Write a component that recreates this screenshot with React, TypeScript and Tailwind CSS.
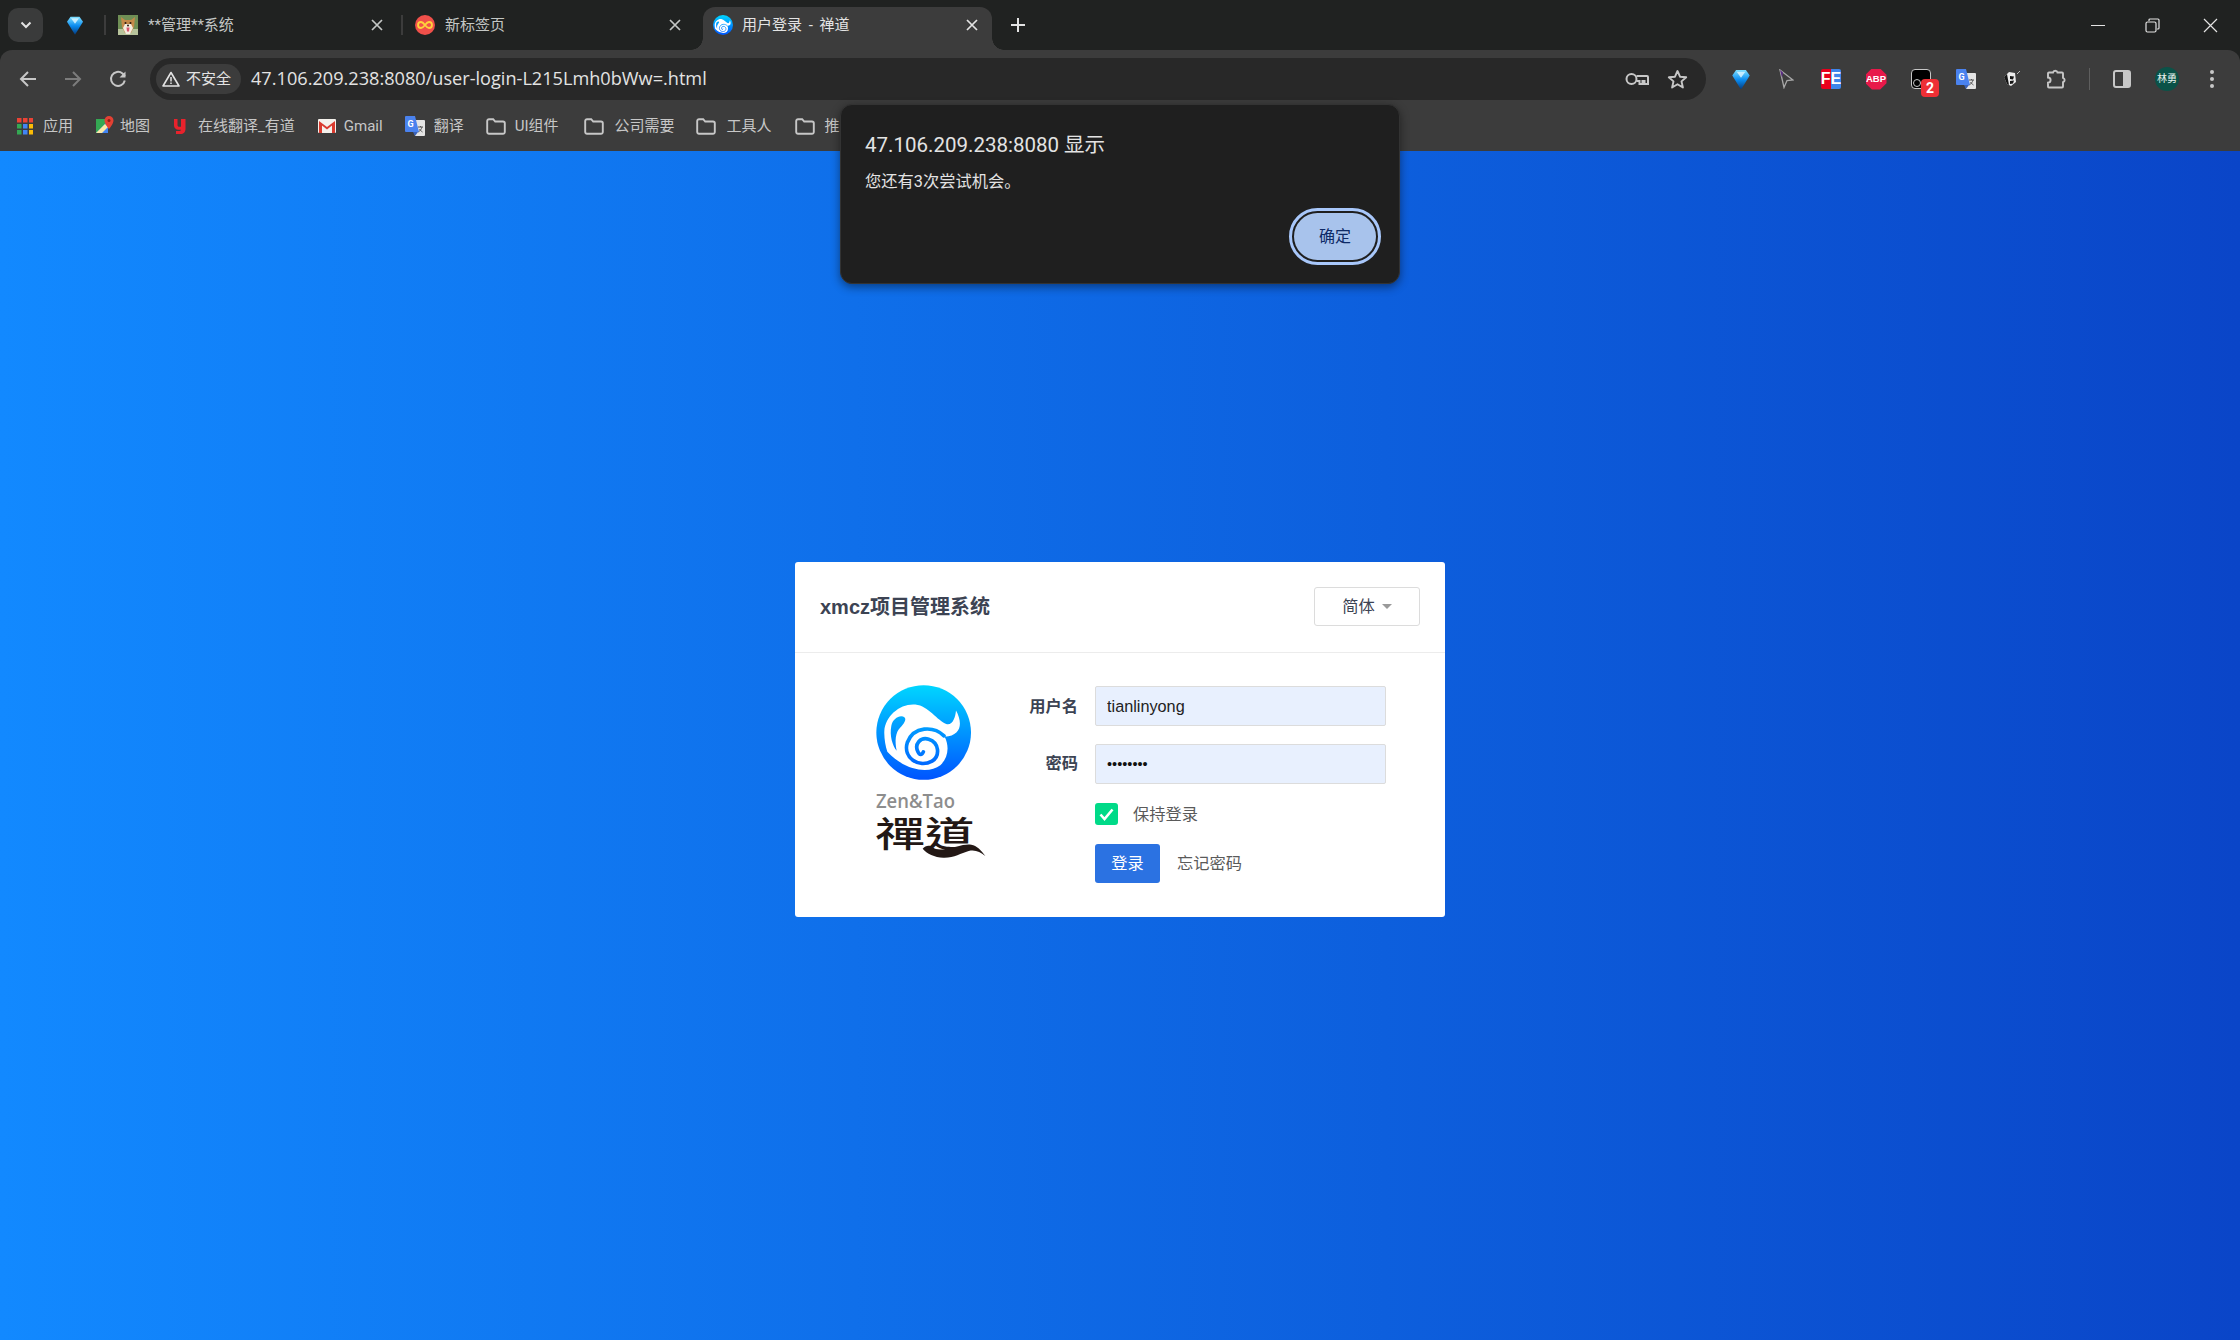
import React from "react";

const ui = { fontFamily: '"Roboto","Noto Sans CJK SC",sans-serif' };
const chromeText = { fontFamily: '"Open Sans","Noto Sans CJK SC",sans-serif' };
const web = { fontFamily: '"Liberation Sans","Noto Sans CJK SC",sans-serif' };

function Diamond({ id, size = 18 }: { id: string; size?: number }) {
  return (
    <svg width={size} height={size * 1.15} viewBox="0 0 16 19">
      <defs>
        <linearGradient id={id} x1="0" y1="0" x2="0" y2="1">
          <stop offset="0" stopColor="#7fe0ff" />
          <stop offset="0.5" stopColor="#0a8cf0" />
          <stop offset="1" stopColor="#04387a" />
        </linearGradient>
      </defs>
      <path d="M3.500 1h9L16 6l-8 13L0 6z" fill={`url(#${id})`} />
      <path d="M4 2.500h8L8 8z" fill="#d9f5ff" opacity=".85" />
    </svg>
  );
}

function CloseX({ color = "#c4c7c5" }: { color?: string }) {
  return (
    <svg width="12" height="12" viewBox="0 0 12 12">
      <path d="M1 1l10 10M11 1L1 11" stroke={color} strokeWidth="1.700" />
    </svg>
  );
}

function Dog() {
  return (
    <svg width="20" height="20" viewBox="0 0 20 20">
      <rect width="20" height="20" fill="#6f8f55" />
      <rect y="14" width="20" height="6" fill="#b7c39b" />
      <path d="M3 2l4 3h6l4-3-1 10-3 6H7l-3-6z" fill="#c58a4a" />
      <path d="M7 9h6l2 4-3 6H8l-3-6z" fill="#f4ecdf" />
      <circle cx="7.500" cy="8" r="1" fill="#2a1b10" />
      <circle cx="12.500" cy="8" r="1" fill="#2a1b10" />
      <circle cx="10" cy="10.500" r="1" fill="#2a1b10" />
      <path d="M8.500 12.500h3l-.5 4H9z" fill="#d9556b" />
    </svg>
  );
}

function Infinity2() {
  return (
    <svg width="20" height="20" viewBox="0 0 20 20">
      <circle cx="10" cy="10" r="10" fill="#f0504a" />
      <path
        d="M10 10c-1.500-2-2.600-3-4-3a3 3 0 000 6c1.400 0 2.500-1 4-3s2.600-3 4-3a3 3 0 010 6c-1.400 0-2.500-1-4-3z"
        fill="none"
        stroke="#ffd23c"
        strokeWidth="1.800"
      />
    </svg>
  );
}

/* Zentao mark, drawn in a 330x315 space with the disc centred on (165,150). */
function Mark({ id }: { id: string }) {
  return (
    <>
      <defs>
        <linearGradient id={id} gradientUnits="userSpaceOnUse" x1="0" y1="8" x2="0" y2="292">
          <stop offset="0" stopColor="#00d6ff" />
          <stop offset="1" stopColor="#0054ff" />
        </linearGradient>
      </defs>
      <circle cx="165" cy="150" r="142" fill={`url(#${id})`} />
      <path
        d="M47 145C50 100 95 62 140 66C180 70 205 115 235 125C252 128 260 105 262 84C282 120 280 160 228 163C242 190 240 225 215 248C180 275 110 265 56 208C50 190 46 165 47 145Z"
        fill="#fff"
      />
      <path
        d="M68 130C72 108 95 95 108 105C114 112 105 125 95 135C80 150 78 175 84 205C72 190 62 160 68 130Z"
        fill={`url(#${id})`}
      />
      <path
        d="M226 160C195 130 135 130 116 180C102 225 150 258 190 236C215 220 212 180 180 170C155 163 136 185 148 208C152 218 160 218 164 208"
        fill="none"
        stroke={`url(#${id})`}
        strokeWidth="11"
        strokeLinecap="round"
      />
    </>
  );
}

function ZenFav() {
  return (
    <svg width="20" height="20" viewBox="23 8 284 284" className="shrink-0">
      <Mark id="favMark" />
    </svg>
  );
}

function Tab({
  width,
  icon,
  title,
  closeRight,
}: {
  width: number;
  icon: React.ReactNode;
  title: string;
  closeRight: string;
}) {
  return (
    <div className="flex items-center h-full pl-[12px]" style={{ width }}>
      {icon}
      <span className="ml-[10px] text-[15px] text-[#c4c7c5] whitespace-nowrap">{title}</span>
      <span className={`ml-auto ${closeRight}`}>
        <CloseX />
      </span>
    </div>
  );
}

function Slot({ children }: { children: React.ReactNode }) {
  return <div className="w-[45px] h-[44px] flex items-center justify-center shrink-0 relative">{children}</div>;
}

function Folder() {
  return (
    <svg width="20" height="17" viewBox="0 0 20 17" className="shrink-0">
      <path
        d="M1.200 3a1.800 1.800 0 011.800-1.800h4.200l2 2.300H17a1.800 1.800 0 011.800 1.800V14a1.800 1.800 0 01-1.800 1.800H3A1.800 1.800 0 011.200 14z"
        fill="none"
        stroke="#c7c7c7"
        strokeWidth="1.900"
      />
    </svg>
  );
}

function Bm({ icon, label, ml, gap }: { icon: React.ReactNode; label: string; ml: string; gap: string }) {
  return (
    <div className={`flex items-center ${ml} shrink-0`}>
      {icon}
      <span className={`${gap} text-[15px] text-[#c7c7c7] whitespace-nowrap`}>{label}</span>
    </div>
  );
}

function TranslateIcon() {
  return (
    <svg width="20" height="21" viewBox="0 0 20 21">
      <path d="M8 4h11a1 1 0 011 1v14a1 1 0 01-1 1H10z" fill="#e4e4e4" />
      <path d="M1 0h9l4 16H1a1 1 0 01-1-1V1a1 1 0 011-1z" fill="#4a82ee" />
      <path d="M8 16l2 4 3-4z" fill="#3a62b8" />
      <text x="5.500" y="11" fontSize="9" fontWeight="700" fill="#fff" textAnchor="middle" fontFamily="Roboto">G</text>
      <path d="M13 11h5M15.500 10v1M17 11c-.5 2-2 4-3.500 5M14.500 13c.5 1 1.500 2 3 3" stroke="#555" strokeWidth="1" fill="none" />
    </svg>
  );
}

function Logo() {
  return (
    <svg width="150" height="200" viewBox="0 0 450 600" className="shrink-0">
      <g transform="translate(56 37.500)">
        <Mark id="logoMark" />
      </g>
      <text x="78" y="415" fontSize="58" fill="#8d8d8d" fontFamily='"Open Sans",sans-serif' fontWeight="600" textLength="237" lengthAdjust="spacingAndGlyphs">
        Zen&amp;Tao
      </text>
      <text x="76" y="530" fontSize="106" fill="#231815" fontFamily='"Noto Sans CJK TC",sans-serif' fontWeight="500" textLength="298" lengthAdjust="spacingAndGlyphs">
        禪道
      </text>
      <path d="M218 536c8-10 22-12 30-4 6 6 20 8 34 6 32-5 60-18 82-14 16 3 30 16 42 34-16-12-30-20-50-15-24 7-44 21-76 20-26-1-50-12-62-27z" fill="#231815" />
    </svg>
  );
}

export default function App() {
  return (
    <div className="relative w-[2240px] h-[1340px] flex flex-col overflow-hidden bg-[#202221]" style={ui}>
      {/* Tab strip */}
      <div className="h-[50px] flex items-center shrink-0 relative">
        <div className="ml-[8px] w-[35px] h-[34px] rounded-[10px] bg-[#3a3b3b] flex items-center justify-center shrink-0">
          <svg width="12" height="8" viewBox="0 0 12 8">
            <path d="M1.500 1.500L6 6l4.500-4.500" fill="none" stroke="#e3e3e3" strokeWidth="2" />
          </svg>
        </div>
        <div className="ml-[24px] w-[16px] flex justify-center shrink-0">
          <Diamond id="diaTab" />
        </div>
        <div className="ml-[21px] w-[2px] h-[20px] bg-[#3c3c3c] shrink-0" />
        <Tab width={295} icon={<Dog />} title="**管理**系统" closeRight="mr-[18px]" />
        <div className="w-[2px] h-[20px] bg-[#3c3c3c] shrink-0" />
        <Tab width={300} icon={<Infinity2 />} title="新标签页" closeRight="mr-[22px]" />
        <div className="self-end h-[43px] w-[289px] bg-[#3c3c3c] rounded-t-[12px] flex items-center pl-[10px] pb-[7px] shrink-0 relative">
          <ZenFav />
          <span className="ml-[9px] text-[15px] text-[#e3e3e3] whitespace-nowrap [word-spacing:3px]">用户登录 - 禅道</span>
          <span className="ml-auto mr-[14px]">
            <CloseX color="#e3e3e3" />
          </span>
          <span className="absolute left-[-12px] bottom-0 w-[12px] h-[12px] bg-[radial-gradient(circle_at_0_0,#202221_11.500px,#3c3c3c_12px)]" />
          <span className="absolute right-[-12px] bottom-0 w-[12px] h-[12px] bg-[radial-gradient(circle_at_100%_0,#202221_11.500px,#3c3c3c_12px)]" />
        </div>
        <div className="ml-[19px] shrink-0">
          <svg width="14" height="14" viewBox="0 0 14 14">
            <path d="M7 0v14M0 7h14" stroke="#e3e3e3" strokeWidth="2" />
          </svg>
        </div>
        <div className="ml-auto flex items-center shrink-0">
          <div className="w-[55px] flex justify-center">
            <span className="block w-[14px] h-[1px] bg-[#e3e3e3]" />
          </div>
          <div className="w-[55px] flex justify-center">
            <svg width="15" height="15" viewBox="0 0 15 15">
              <path d="M4 3V2a1 1 0 011-1h8a1 1 0 011 1v8a1 1 0 01-1 1h-1" fill="none" stroke="#e3e3e3" strokeWidth="1.200" />
              <rect x="1" y="4" width="10" height="10" rx="1.500" fill="none" stroke="#e3e3e3" strokeWidth="1.200" />
            </svg>
          </div>
          <div className="w-[60px] flex justify-center">
            <svg width="15" height="15" viewBox="0 0 15 15">
              <path d="M1 1l13 13M14 1L1 14" stroke="#e3e3e3" strokeWidth="1.200" />
            </svg>
          </div>
        </div>
      </div>

      {/* Toolbar */}
      <div className="h-[51px] flex items-center bg-[#3c3c3c] rounded-t-[12px] shrink-0 pl-[5px] pt-[7px]">
        <Slot>
          <svg width="20" height="20" viewBox="0 0 20 20">
            <path d="M18 10H3M10 3l-7 7 7 7" fill="none" stroke="#c7c7c7" strokeWidth="2" />
          </svg>
        </Slot>
        <Slot>
          <svg width="20" height="20" viewBox="0 0 20 20">
            <path d="M2 10h15M10 3l7 7-7 7" fill="none" stroke="#7c7c7c" strokeWidth="2" />
          </svg>
        </Slot>
        <Slot>
          <svg width="20" height="20" viewBox="0 0 20 20">
            <path d="M16.800 11.500A7 7 0 1114.500 4.500L17 7" fill="none" stroke="#c7c7c7" strokeWidth="2" />
            <path d="M17.500 2.500v6h-6z" fill="#c7c7c7" />
          </svg>
        </Slot>
        <div className="ml-[10px] w-[1556px] h-[42px] rounded-full bg-[#282828] flex items-center pl-[6px] pr-[9px] shrink-0">
          <div className="w-[85px] h-[30px] rounded-full bg-[#3c3c3c] flex items-center pl-[6px] shrink-0">
            <svg width="18" height="16" viewBox="0 0 18 16">
              <path d="M9 1.500L17 15H1z" fill="none" stroke="#e3e3e3" strokeWidth="1.600" strokeLinejoin="round" />
              <path d="M9 6v4.500M9 11.500v1.500" stroke="#e3e3e3" strokeWidth="1.500" />
            </svg>
            <span className="ml-[6px] text-[15px] text-[#e3e3e3] whitespace-nowrap">不安全</span>
          </div>
          <span className="ml-[10px] text-[18.150px] text-[#e3e3e3] whitespace-nowrap" style={chromeText}>
            47.106.209.238:8080/user-login-L215Lmh0bWw=.html
          </span>
          <div className="ml-auto w-[40px] flex justify-center shrink-0">
            <svg width="24" height="14" viewBox="0 0 24 14">
              <circle cx="6.500" cy="7" r="5" fill="none" stroke="#c7c7c7" strokeWidth="2" />
              <path d="M11.500 4h10.500a1 1 0 011 1v7h-3.500v-3h-2v3h-3v-3h-3" fill="none" stroke="#c7c7c7" strokeWidth="2" />
            </svg>
          </div>
          <div className="w-[40px] flex justify-center shrink-0">
            <svg width="21" height="20" viewBox="0 0 21 20">
              <path d="M10.500 2l2.500 5.700 6.200.6-4.700 4.100 1.400 6.100-5.400-3.200-5.400 3.200 1.400-6.100-4.700-4.100 6.200-.6z" fill="none" stroke="#c7c7c7" strokeWidth="1.900" strokeLinejoin="round" />
            </svg>
          </div>
        </div>
        <div className="ml-[12.500px] flex items-center">
          <Slot>
            <Diamond id="diaBar" />
          </Slot>
          <Slot>
            <svg width="16" height="20" viewBox="0 0 16 20">
              <path d="M2 1l13 10-6 .5-3 7z" fill="none" stroke="#a8a8a8" strokeWidth="1.300" />
              <path d="M2 1l3 2.500-1 5z" fill="#5b2a86" />
            </svg>
          </Slot>
          <Slot>
            <div className="w-[20px] h-[20px] rounded-[2px] flex items-center justify-center bg-[linear-gradient(90deg,#e8001c_50%,#3f86ea_50%)]">
              <span className="text-[16px] leading-none font-black text-white" style={web}>FE</span>
            </div>
          </Slot>
          <Slot>
            <div className="w-[21px] h-[21px] [clip-path:polygon(30%_0,70%_0,100%_30%,100%_70%,70%_100%,30%_100%,0_70%,0_30%)] bg-[#e8194a] flex items-center justify-center">
              <span className="text-[9.500px] leading-none font-bold text-white" style={web}>ABP</span>
            </div>
          </Slot>
          <Slot>
            <div className="relative w-[20px] h-[20px] rounded-[4px] bg-black border border-[#c7c7c7]">
              <span className="absolute left-[1px] bottom-[1px] w-[8px] h-[8px] rounded-full border border-[#c7c7c7]" />
              <span className="absolute left-[9px] top-[9px] w-[18px] h-[18px] rounded-[4px] bg-[#ee2f35] flex items-center justify-center text-[14px] leading-none font-bold text-white">2</span>
            </div>
          </Slot>
          <Slot>
            <TranslateIcon />
          </Slot>
          <Slot>
            <svg width="21" height="20" viewBox="0 0 21 20">
              <path d="M3 8l5-5 6 1 1 9-5 4-4-2z" fill="#ececec" />
              <path d="M3 8l3-3 2 11-2-1zM9 7l4 .5-1 3-3-.5zM9 12l4-.5-1 3-3 .5z" fill="#151515" />
              <path d="M16 5l3-3" stroke="#bdbdbd" strokeWidth="1" />
            </svg>
          </Slot>
          <Slot>
            <svg width="21" height="21" viewBox="0 0 21 21">
              <path d="M2 4.500a1 1 0 011-1h4a2.300 2.300 0 014.500 0h4.500a1 1 0 011 1v4.300a2.300 2.300 0 010 4.400v4.300a1 1 0 01-1 1H3a1 1 0 01-1-1v-3.800a2.600 2.600 0 000-5.200z" fill="none" stroke="#c7c7c7" strokeWidth="1.900" />
            </svg>
          </Slot>
          <div className="ml-[10px] w-[1px] h-[22px] bg-[#5f5f5f] shrink-0" />
          <div className="ml-[10px] flex items-center">
            <Slot>
              <svg width="18" height="18" viewBox="0 0 18 18">
                <rect x="1" y="1" width="16" height="16" rx="2" fill="none" stroke="#c7c7c7" strokeWidth="2" />
                <rect x="10" y="1" width="7" height="16" fill="#c7c7c7" />
              </svg>
            </Slot>
            <Slot>
              <div className="w-[24px] h-[24px] rounded-full bg-[#0b5248] flex items-center justify-center text-[10px] leading-none text-[#e9f2ee] whitespace-nowrap">林勇</div>
            </Slot>
            <Slot>
              <svg width="6" height="20" viewBox="0 0 6 20">
                <circle cx="3" cy="3" r="2" fill="#c7c7c7" />
                <circle cx="3" cy="10" r="2" fill="#c7c7c7" />
                <circle cx="3" cy="17" r="2" fill="#c7c7c7" />
              </svg>
            </Slot>
          </div>
        </div>
      </div>

      {/* Bookmarks */}
      <div className="h-[50px] flex items-center bg-[#3c3c3c] shrink-0">
        <Bm
          ml="ml-[17px]"
          gap="ml-[10px]"
          label="应用"
          icon={
            <svg width="16" height="17" viewBox="0 0 16 17">
              {[
                [0, 0, "#ea4335"], [6, 0, "#ea4335"], [12, 0, "#ea4335"],
                [0, 6, "#34a853"], [6, 6, "#4285f4"], [12, 6, "#fbbc05"],
                [0, 12, "#34a853"], [6, 12, "#4285f4"], [12, 12, "#fbbc05"],
              ].map(([x, y, c], i) => (
                <rect key={i} x={x as number} y={y as number} width="4.500" height="4.500" fill={c as string} />
              ))}
            </svg>
          }
        />
        <Bm
          ml="ml-[23px]"
          gap="ml-[6px]"
          label="地图"
          icon={
            <svg width="18" height="20" viewBox="0 0 18 20">
              <path d="M0 3h12v14H0z" fill="#34a853" />
              <path d="M0 17l12-12v12z" fill="#4285f4" />
              <path d="M0 17L9 8l3 3-6 6z" fill="#fbe9a6" />
              <path d="M13 0a4.500 4.500 0 014.500 4.500C17.500 8 13 13 13 13S8.500 8 8.500 4.500A4.500 4.500 0 0113 0z" fill="#e34133" />
              <circle cx="13" cy="4.500" r="1.500" fill="#8e1f14" />
            </svg>
          }
        />
        <Bm
          ml="ml-[24px]"
          gap="ml-[12px]"
          label="在线翻译_有道"
          icon={
            <svg width="12" height="15" viewBox="0 0 12 15">
              <path d="M0 0h3.500v6c0 1 .8 1.800 1.800 1.800H7V0h4.500v10c0 3-2 5-5 5H2v-3h3.500c1 0 1.500-.7 1.500-1.200H4.500C2 10.800 0 9 0 6.500z" fill="#e8222c" />
            </svg>
          }
        />
        <Bm
          ml="ml-[23px]"
          gap="ml-[8px]"
          label="Gmail"
          icon={
            <svg width="18" height="14" viewBox="0 0 18 14">
              <rect width="18" height="14" rx="1" fill="#f4f1ec" />
              <path d="M1 14V2l8 6 8-6v12h-3V6.500L9 10.500 4 6.500V14z" fill="#d93a2e" />
            </svg>
          }
        />
        <Bm ml="ml-[22px]" gap="ml-[9px]" label="翻译" icon={<TranslateIcon />} />
        <Bm ml="ml-[22px]" gap="ml-[9px]" label="UI组件" icon={<Folder />} />
        <Bm ml="ml-[26px]" gap="ml-[10px]" label="公司需要" icon={<Folder />} />
        <Bm ml="ml-[22px]" gap="ml-[10px]" label="工具人" icon={<Folder />} />
        <Bm ml="ml-[23px]" gap="ml-[10px]" label="推" icon={<Folder />} />
      </div>

      {/* Page */}
      <div className="flex-1 pt-[411px] bg-[linear-gradient(90deg,#1289ff_0%,#0a45c8_100%)]" style={web}>
        <div className="w-[650px] h-[355px] mx-auto bg-white rounded-[3px]">
          <div className="h-[91px] pb-[2px] border-b border-[#ececec] flex items-center justify-between px-[25px]">
            <h1 className="mt-[2px] text-[20px] font-bold text-[#3c4353]">xmcz项目管理系统</h1>
            <div className="w-[106px] h-[39px] border border-[#dcdcdc] rounded-[3px] flex items-center justify-center">
              <span className="text-[16.250px] text-[#3c4353]">简体</span>
              <span className="ml-[7px] w-0 h-0 border-x-[5px] border-x-transparent border-t-[5px] border-t-[#9a9a9a]" />
            </div>
          </div>
          <div className="flex items-start">
            <div className="ml-[55px] mt-[17px]">
              <Logo />
            </div>
            <div className="pt-[33px]">
              <div className="flex items-center h-[40px]">
                <label className="w-[78px] text-right text-[16.250px] font-bold text-[#3c4353]">用户名</label>
                <input readOnly defaultValue="tianlinyong" className="ml-[17px] w-[291px] h-[40px] px-[11px] bg-[#e8f0fe] border border-[#dcdcdc] rounded-[2px] text-[16.250px] text-[#222] outline-none" />
              </div>
              <div className="flex items-center h-[40px] mt-[18px]">
                <label className="w-[78px] pb-[2px] text-right text-[16.250px] font-bold text-[#3c4353]">密码</label>
                <input readOnly type="password" defaultValue="12345678" className="ml-[17px] w-[291px] h-[40px] px-[11px] bg-[#e8f0fe] border border-[#dcdcdc] rounded-[2px] text-[14.500px] text-[#111] outline-none" />
              </div>
              <div className="flex items-center h-[22px] mt-[19px] ml-[95px]">
                <div className="w-[23px] h-[22px] rounded-[3px] bg-[#00da88] flex items-center justify-center">
                  <svg width="15" height="13" viewBox="0 0 15 13">
                    <path d="M1.500 6.500l4 4.500 8-9.500" fill="none" stroke="#fff" strokeWidth="2.600" />
                  </svg>
                </div>
                <span className="ml-[15px] text-[16.250px] text-[#5a5a5a]">保持登录</span>
              </div>
              <div className="flex items-center mt-[19px] ml-[95px]">
                <div className="w-[65px] h-[39px] rounded-[3px] bg-[#2b72e2] flex items-center justify-center text-[16.250px] text-white">登录</div>
                <span className="ml-[17px] text-[16.250px] text-[#5a5a5a]">忘记密码</span>
              </div>
            </div>
          </div>
        </div>
      </div>

      {/* Alert dialog */}
      <div className="absolute left-[840px] top-[104px] w-[560px] h-[180px] rounded-[12px] bg-[#1f1f1f] border border-[#333] shadow-[0_3px_10px_rgba(0,0,0,0.45)]" style={ui}>
        <div className="absolute left-[24px] top-[26px] text-[20.500px] leading-[28px] text-[#e3e3e3] whitespace-nowrap">47.106.209.238:8080 显示</div>
        <div className="absolute left-[24px] top-[65px] text-[16.250px] leading-[24px] text-[#e3e3e3] whitespace-nowrap">您还有3次尝试机会。</div>
        <div className="absolute left-[453px] top-[108px] w-[82px] h-[47px] rounded-full bg-[#a8c3ec] text-[#0d2a66] text-[16px] flex items-center justify-center outline-[3px] outline-[#a8c7fa] outline-offset-[2px] border-0">确定</div>
      </div>
    </div>
  );
}
